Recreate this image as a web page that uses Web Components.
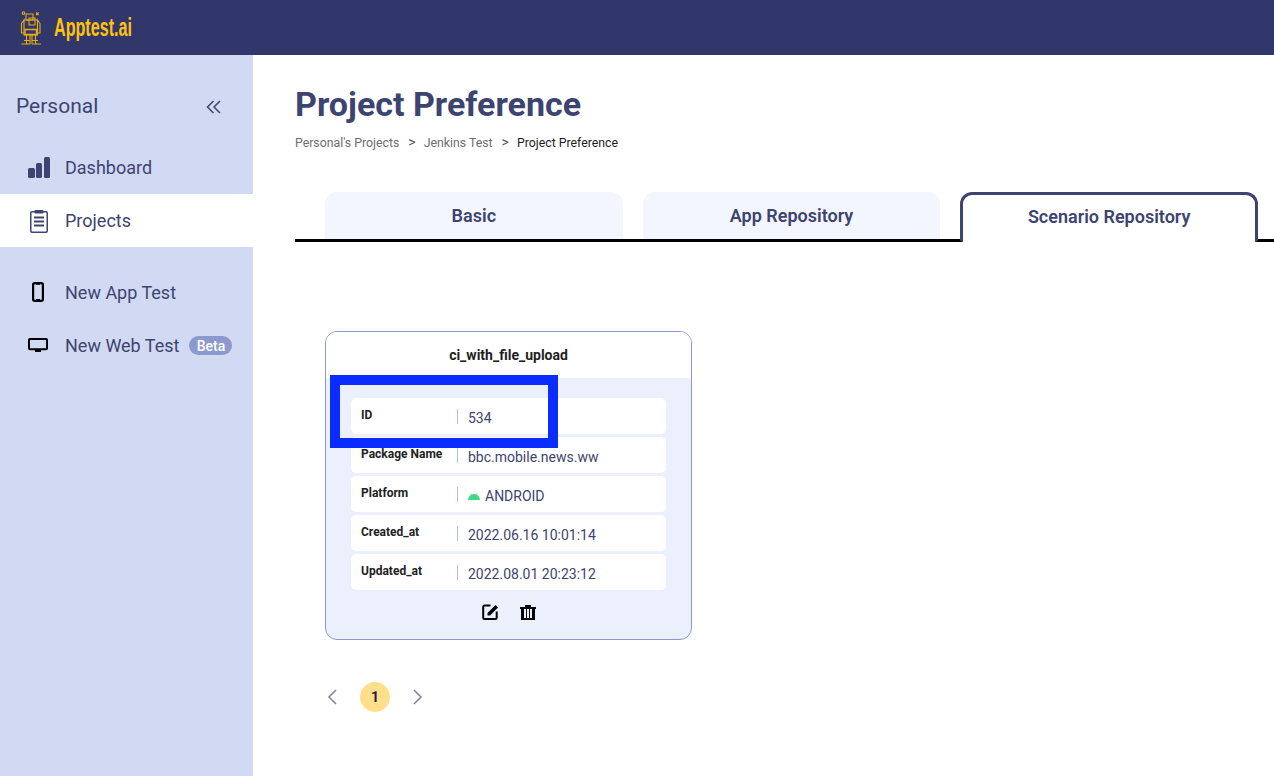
<!DOCTYPE html>
<html>
<head>
<meta charset="utf-8">
<title>Project Preference</title>
<style>
    html, body { margin: 0; height: 100%; }
    body { font-family: Roboto, "Liberation Sans", sans-serif; color: #3d4470; overflow: hidden; }
    app-shell { height: 776px; }
</style>
</head>
<body>
<app-shell>
    <side-bar slot="side">
        <nav-item icon="chart">Dashboard</nav-item>
        <nav-item icon="clip" active>Projects</nav-item>
        <nav-item icon="phone" gap>New App Test</nav-item>
        <nav-item icon="monitor">New Web Test<beta-badge>Beta</beta-badge></nav-item>
    </side-bar>
    <page-head title="Project Preference">
        <span>Personal's Projects</span>
        <span>Jenkins Test</span>
        <span>Project Preference</span>
    </page-head>
    <tab-bar>
        <tab-item>Basic</tab-item>
        <tab-item>App Repository</tab-item>
        <tab-item active>Scenario Repository</tab-item>
    </tab-bar>
    <scenario-card title="ci_with_file_upload">
        <info-row label="ID">534</info-row>
        <info-row label="Package Name">bbc.mobile.news.ww</info-row>
        <info-row label="Platform"><android-mark></android-mark>ANDROID</info-row>
        <info-row label="Created_at">2022.06.16 10:01:14</info-row>
        <info-row label="Updated_at">2022.08.01 20:23:12</info-row>
    </scenario-card>
    <page-nav></page-nav>
</app-shell>

<script>
const ICONS = {
    chart: `<svg width="22" height="22" viewBox="0 0 22 22" fill="#3d4470"><rect x="0" y="11" width="7" height="10" rx="1.5"/><rect x="8" y="6" width="6" height="15" rx="1.5"/><rect x="16" y="0" width="6" height="21" rx="1.5"/></svg>`,
    clip: `<svg width="22" height="24" viewBox="0 0 22 24" fill="none" stroke="#3d4470"><rect x="2.75" y="2.75" width="16.5" height="20.5" rx="1.2" stroke-width="1.5"/><rect x="6.5" y="1" width="9" height="3.5" rx="1" fill="#3d4470" stroke="none"/><path d="M6 8.5h10M6 12.5h10M6 16.5h10" stroke-width="2"/></svg>`,
    phone: `<svg width="22" height="22" viewBox="0 0 22 22" fill="none"><rect x="5.1" y="1.1" width="9.8" height="17.8" rx="1.6" stroke="#000" stroke-width="2.2"/><path d="M8 1.5h4v1.2H8zM8 17h4v1.5H8z" fill="#000"/></svg>`,
    monitor: `<svg width="22" height="16" viewBox="0 0 22 16" fill="none"><rect x="1" y="1" width="18" height="10.2" rx="1" stroke="#000" stroke-width="2"/><rect x="7" y="12" width="6" height="2" fill="#000"/></svg>`
};

class AppShell extends HTMLElement {
    constructor() {
        super();
        this.attachShadow({mode: "open"}).innerHTML = `
            <style>
                :host { display: grid; grid-template-rows: 55px 1fr; grid-template-columns: 253px 1fr; }
                header { grid-column: 1 / 3; background: #32376b; display: flex; align-items: center; padding-left: 20px; gap: 11px; }
                .brand {
                    color: #ffc20e; font: 700 26px "Liberation Sans Narrow", "Liberation Sans", sans-serif;
                    transform: scaleX(.62); transform-origin: left center;
                }
                main { position: relative; padding: 0 0 0 42px; min-width: 0; }
            </style>
            <header>
                <svg width="23" height="34" viewBox="0 0 23 34" fill="none" stroke="#e6ae12" stroke-width="1.100">
                    <circle cx="3.500" cy="2" r="1.300"/>
                    <path d="M16 1.500l2.600 2.600M18.600 1.500L16 4.100"/>
                    <path d="M6 3h7v6H6zM9 7h6v7H9z"/>
                    <path d="M4 9h13.500v15H4zM1.500 12.500L4 9v13H1.500zM20 12.500L17.500 9v13H20z"/>
                    <path d="M6.500 24v9M10 24v9M12 24v9M15.500 24v9M1.500 33h9M12 33h9M4 29.500h6M12 29.500h6"/>
                    <path d="M5 18.500h11.500v5H5z" stroke-width="1.400"/>
                </svg>
                <span class="brand">Apptest.ai</span>
            </header>
            <slot name="side"></slot>
            <main>
                <slot></slot>
            </main>
        `;
    }
}
customElements.define("app-shell", AppShell);

class SideBar extends HTMLElement {
    constructor() {
        super();
        this.attachShadow({mode: "open"}).innerHTML = `
            <style>
                :host { display: block; background: #d2daf3; color: #3d4470; }
                .top { display: flex; align-items: center; justify-content: space-between; height: 86px; padding: 16px 31px 0 16px; box-sizing: border-box; font-size: 21px; }
                svg { display: block; margin-top: 1px; }
            </style>
            <div class="top">
                <span>Personal</span>
                <svg width="16" height="16" viewBox="0 0 16 16" fill="none" stroke="#3d4470" stroke-width="1.500"><path d="M7.500 2L1.500 8l6 6M14 2L8 8l6 6"/></svg>
            </div>
            <slot></slot>
        `;
    }
}
customElements.define("side-bar", SideBar);

class NavItem extends HTMLElement {
    constructor() {
        super();
        const icon = ICONS[this.getAttribute("icon")] || "";
        this.attachShadow({mode: "open"}).innerHTML = `
            <style>
                :host { display: flex; align-items: center; height: 53px; padding-left: 28px; font-size: 18px; color: #3d4470; }
                :host([active]) { background: #fff; }
                :host([gap]) { margin-top: 19px; }
                .icon { width: 22px; height: 24px; margin-right: 15px; display: flex; align-items: center; justify-content: center; }
            </style>
            <span class="icon">${icon}</span>
            <slot></slot>
        `;
    }
}
customElements.define("nav-item", NavItem);

class BetaBadge extends HTMLElement {
    constructor() {
        super();
        this.attachShadow({mode: "open"}).innerHTML = `
            <style>
                :host { display: inline-flex; align-items: center; justify-content: center; width: 43px; height: 19px; margin-left: 10px; border-radius: 10px; background: #8b99cf; color: #fff; font-size: 14px; font-weight: 500; }
            </style>
            <slot></slot>
        `;
    }
}
customElements.define("beta-badge", BetaBadge);

class PageHead extends HTMLElement {
    constructor() {
        super();
        this.attachShadow({mode: "open"}).innerHTML = `
            <style>
                :host { display: block; padding-top: 29px; }
                h1 { margin: 0; font-size: 34px; line-height: 40px; font-weight: 700; color: #3d4470; }
                nav { display: flex; margin-top: 9px; height: 18px; align-items: baseline; font-size: 12.3px; line-height: 18px; color: #6d6d6d; }
                ::slotted(span:not(:first-child))::before { content: ">"; margin: 0 8px 0 9px; color: #555; font-size: 14px; }
                ::slotted(span:last-child) { color: #1d1d1d; }
            </style>
            <h1>${this.getAttribute("title")}</h1>
            <nav><slot></slot></nav>
        `;
    }
}
customElements.define("page-head", PageHead);

class TabBar extends HTMLElement {
    constructor() {
        super();
        this.attachShadow({mode: "open"}).innerHTML = `
            <style>
                :host { display: grid; grid-template-columns: repeat(3, 1fr); gap: 20px; margin-top: 41px; padding: 0 16px 0 30px; height: 47px; border-bottom: 3px solid #000; }
            </style>
            <slot></slot>
        `;
    }
}
customElements.define("tab-bar", TabBar);

class TabItem extends HTMLElement {
    constructor() {
        super();
        this.attachShadow({mode: "open"}).innerHTML = `
            <style>
                :host { display: flex; align-items: center; justify-content: center; box-sizing: border-box; height: 47px; background: #f3f6fe; border-radius: 12px 12px 0 0; font-size: 18px; font-weight: 600; color: #3d4470; }
                :host([active]) { height: 50px; padding-bottom: 4px; background: #fff; border: 3px solid #3d4470; border-bottom: 0; border-radius: 12px 12px 3px 3px; }
            </style>
            <slot></slot>
        `;
    }
}
customElements.define("tab-item", TabItem);

class ScenarioCard extends HTMLElement {
    constructor() {
        super();
        this.attachShadow({mode: "open"}).innerHTML = `
            <style>
                :host { display: block; position: relative; width: 367px; box-sizing: border-box; margin: 89px 0 0 30px; background: #ecf0fd; border: 1px solid #8b99cf; border-radius: 12px; }
                .name { height: 46px; display: flex; align-items: center; justify-content: center; background: #fff; border-radius: 11px 11px 0 0; font-size: 14px; font-weight: 700; color: #1e1e1e; }
                .rows { display: flex; flex-direction: column; gap: 3px; padding: 20px 25px 0; }
                .tools { display: flex; justify-content: center; gap: 22px; height: 49px; padding-top: 14px; box-sizing: border-box; }
                .mark { position: absolute; left: 4px; top: 43px; width: 228px; height: 73px; box-sizing: border-box; border: 10px solid #0a2cff; }
            </style>
            <div class="name">${this.getAttribute("title")}</div>
            <div class="rows"><slot></slot></div>
            <div class="tools">
                <svg width="16" height="16" viewBox="0 0 16 16" fill="none"><path d="M8.500 1.500H2.500a1.300 1.300 0 0 0-1.300 1.300v10.900a1.300 1.300 0 0 0 1.300 1.300h10.900a1.300 1.300 0 0 0 1.300-1.300V7.500" stroke="#000" stroke-width="2"/><path d="M5.500 11.500V9L13.500 1l2.500 2.500L8 11.500z" fill="#000"/></svg>
                <svg width="16" height="16" viewBox="0 0 16 16" fill="#000"><path d="M5 1h6v2h5v2H0V3h5z"/><path d="M1 5h3v9h2V5h1v9h2V5h1v9h2V5h3v11H1z"/></svg>
            </div>
            <div class="mark"></div>
        `;
    }
}
customElements.define("scenario-card", ScenarioCard);

class InfoRow extends HTMLElement {
    constructor() {
        super();
        this.attachShadow({mode: "open"}).innerHTML = `
            <style>
                :host { display: flex; align-items: center; height: 36px; background: #fff; border-radius: 5px; }
                .label { box-sizing: border-box; width: 106px; padding: 0 0 2px 10px; font-size: 12px; font-weight: 700; color: #222; }
                .value { box-sizing: border-box; display: flex; align-items: center; height: 15px; padding: 4px 0 0 10px; border-left: 1px solid #b4bde0; font-size: 14px; line-height: 14px; color: #3d4470; }
            </style>
            <div class="label">${this.getAttribute("label")}</div>
            <div class="value"><slot></slot></div>
        `;
    }
}
customElements.define("info-row", InfoRow);

class AndroidMark extends HTMLElement {
    constructor() {
        super();
        this.attachShadow({mode: "open"}).innerHTML = `
            <style>
                :host { display: inline-flex; margin-right: 5px; }
            </style>
            <svg width="12" height="7" viewBox="0 0 12 7" fill="#3ddc84"><path d="M0 7a6 6 0 0 1 12 0z"/><path d="M2.500 .4l1.500 2.200M9.500 .4L8 2.600" stroke="#3ddc84" stroke-width=".8"/></svg>
        `;
    }
}
customElements.define("android-mark", AndroidMark);

class PageNav extends HTMLElement {
    constructor() {
        super();
        this.attachShadow({mode: "open"}).innerHTML = `
            <style>
                :host { display: flex; align-items: center; margin: 42px 0 0 32px; height: 30px; }
                .num { width: 30px; height: 30px; margin: 0 22px; display: flex; align-items: center; justify-content: center; border-radius: 50%; background: #ffdf8a; color: #2a1a4a; font-size: 14px; font-weight: 700; }
                svg { display: block; }
            </style>
            <svg width="11" height="16" viewBox="0 0 11 16" fill="none" stroke="#8a849c" stroke-width="1.600"><path d="M9 1L2 8l7 7"/></svg>
            <span class="num">1</span>
            <svg width="11" height="16" viewBox="0 0 11 16" fill="none" stroke="#8a849c" stroke-width="1.600"><path d="M2 1l7 7-7 7"/></svg>
        `;
    }
}
customElements.define("page-nav", PageNav);
</script>
</body>
</html>
